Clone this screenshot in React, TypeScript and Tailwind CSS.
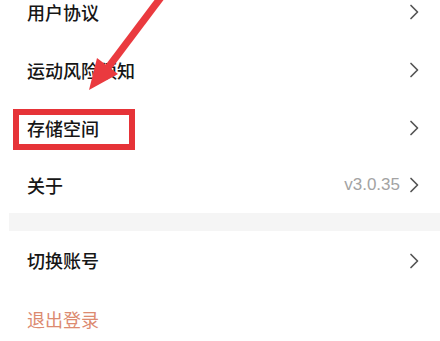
import React from "react";

const font = { fontFamily: '"Noto Sans CJK SC", "Noto Sans", sans-serif' };

function Chevron() {
  return (
    <svg width="10" height="16" viewBox="0 0 10 16" className="shrink-0">
      <path d="M2 1.5 L8.5 8 L2 14.5" fill="none" stroke="#555" strokeWidth="1.7" strokeLinecap="round" strokeLinejoin="round" />
    </svg>
  );
}

function Row({ label, right, h = "h-[58px]" }: { label: string; right?: React.ReactNode; h?: string }) {
  return (
    <div className={`flex items-center justify-between pl-[27px] pr-[21px] ${h}`}>
      <span className="text-[18px] font-medium text-[#161616]" style={font}>{label}</span>
      <div className="flex items-center gap-[9px]">
        {right}
        <Chevron />
      </div>
    </div>
  );
}

export default function App() {
  return (
    <div className="relative w-[440px] h-[341px] overflow-hidden bg-white">
      <div className="-mt-[17px] flex flex-col">
        <Row label="用户协议" />
        <Row label="运动风险须知" />
        <Row label="存储空间" />
        <Row
          label="关于"
          h="h-[56px]"
          right={<span className="text-[17px] text-[#a3a3a3]" style={{ fontFamily: '"Liberation Sans", Arial, sans-serif' }}>v3.0.35</span>}
        />
        <div className="ml-[9px] h-[18px] bg-[#f5f5f5]" />
        <Row label="切换账号" h="h-[59px]" />
        <div className="flex h-[58px] items-center pl-[27px]">
          <span className="text-[18px] text-[#dc8a70]" style={font}>退出登录</span>
        </div>
      </div>

      <div className="absolute left-[13px] top-[109px] h-[41px] w-[122px] border-[6px] border-[#e63338]" />

      <svg className="absolute left-0 top-0" width="440" height="341" viewBox="0 0 440 341">
        <polygon points="159,-6 165,-2 110,71 104,67" fill="#ea3a3f" />
        <polygon points="89,90 97,58 118,74" fill="#ea3a3f" />
      </svg>
    </div>
  );
}
